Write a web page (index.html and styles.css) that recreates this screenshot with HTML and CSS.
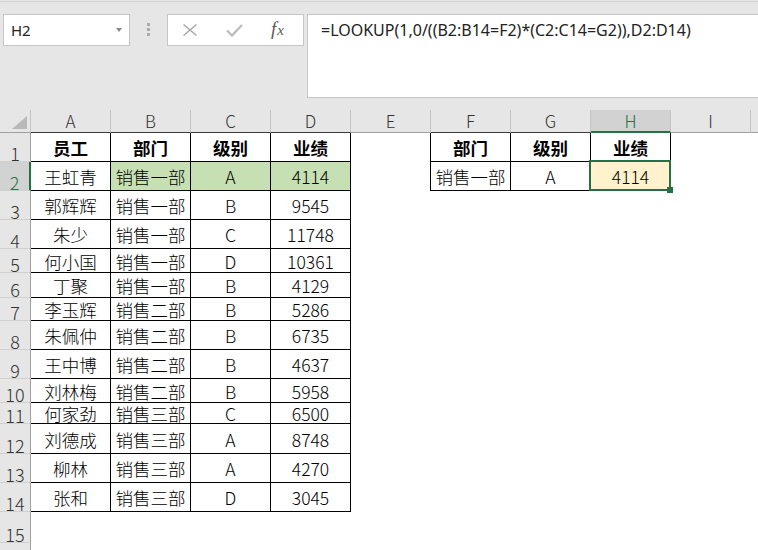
FILE: index.html
```html
<!DOCTYPE html>
<html lang="zh-CN">
<head>
<meta charset="utf-8">
<title>LOOKUP</title>
<link rel="stylesheet" href="styles.css">
</head>
<body>
<div class="toolbar">
  <div class="namebox"><span class="ref">H2</span><span class="caret"></span></div>
  <div class="grip"><i></i><i></i><i></i></div>
  <div class="fnbox">
    <svg class="ico-x" width="14" height="12" viewBox="0 0 14 12"><path d="M0.5 0.5 L13.5 11.5 M13.5 0.5 L0.5 11.5" stroke="#a3a3a3" stroke-width="1.3" fill="none"/></svg>
    <svg class="ico-ok" width="17" height="13" viewBox="0 0 17 13"><path d="M1 6.5 L6 11.5 L16 1" stroke="#bdbdbd" stroke-width="2.4" fill="none"/></svg>
    <span class="fx"><i>f</i><i class="fx-x">x</i></span>
  </div>
  <div class="formula">=LOOKUP(1,0/((B2:B14=F2)*(C2:C14=G2)),D2:D14)</div>
</div>
<div class="sheet">
  <div class="row colhead">
    <div class="corner"><span class="tri"></span></div>
    <div class="ch k">A</div><div class="ch k">B</div><div class="ch k">C</div><div class="ch k">D</div>
    <div class="ch">E</div><div class="ch k">F</div><div class="ch k">G</div><div class="ch cur">H</div>
    <div class="ch">I</div><div class="ch last"></div>
  </div>
  <div class="row h29">
    <div class="rh">1</div>
    <div class="c t b">员工</div><div class="c t b">部门</div><div class="c t b">级别</div><div class="c t b">业绩</div>
    <div class="c e"></div>
    <div class="c t fl b">部门</div><div class="c t b">级别</div><div class="c t b">业绩</div>
  </div>
  <div class="row h29">
    <div class="rh cur">2</div>
    <div class="c t">王虹青</div><div class="c t g">销售一部</div><div class="c t g">A</div><div class="c t g">4114</div>
    <div class="c e"></div>
    <div class="c t fl">销售一部</div><div class="c t">A</div>
    <div class="c t y active">4114<span class="selbox"></span><span class="handle"></span></div>
  </div>
  <div class="row h29"><div class="rh">3</div><div class="c t">郭辉辉</div><div class="c t">销售一部</div><div class="c t">B</div><div class="c t">9545</div></div>
  <div class="row h29"><div class="rh">4</div><div class="c t">朱少</div><div class="c t">销售一部</div><div class="c t">C</div><div class="c t">11748</div></div>
  <div class="row h24"><div class="rh">5</div><div class="c t">何小国</div><div class="c t">销售一部</div><div class="c t">D</div><div class="c t">10361</div></div>
  <div class="row h25"><div class="rh">6</div><div class="c t">丁聚</div><div class="c t">销售一部</div><div class="c t">B</div><div class="c t">4129</div></div>
  <div class="row h23"><div class="rh">7</div><div class="c t">李玉辉</div><div class="c t">销售二部</div><div class="c t">B</div><div class="c t">5286</div></div>
  <div class="row h29"><div class="rh">8</div><div class="c t">朱佩仲</div><div class="c t">销售二部</div><div class="c t">B</div><div class="c t">6735</div></div>
  <div class="row h29"><div class="rh">9</div><div class="c t">王中博</div><div class="c t">销售二部</div><div class="c t">B</div><div class="c t">4637</div></div>
  <div class="row h24"><div class="rh">10</div><div class="c t">刘林梅</div><div class="c t">销售二部</div><div class="c t">B</div><div class="c t">5958</div></div>
  <div class="row h21"><div class="rh">11</div><div class="c t">何家劲</div><div class="c t">销售三部</div><div class="c t">C</div><div class="c t">6500</div></div>
  <div class="row h30"><div class="rh">12</div><div class="c t">刘德成</div><div class="c t">销售三部</div><div class="c t">A</div><div class="c t">8748</div></div>
  <div class="row h29"><div class="rh">13</div><div class="c t">柳林</div><div class="c t">销售三部</div><div class="c t">A</div><div class="c t">4270</div></div>
  <div class="row h29"><div class="rh">14</div><div class="c t">张和</div><div class="c t">销售三部</div><div class="c t">D</div><div class="c t">3045</div></div>
  <div class="row h31"><div class="rh">15</div></div>
  <div class="row h8"><div class="rh"></div></div>
</div>
</body>
</html>
```

FILE: styles.css
```css
* { box-sizing: border-box; margin: 0; padding: 0; }
html, body { width: 758px; height: 550px; overflow: hidden; }
body {
  background: #fff;
  font-family: "Noto Sans CJK SC", "Noto Sans", sans-serif;
  color: #000;
}

/* ---------- formula bar ---------- */
.toolbar {
  height: 110px;
  display: flex;
  align-items: flex-start;
  padding: 14px 0 0 3px;
  background: linear-gradient(#e6e6e6 1px, #d2d2d2 1px, #d2d2d2 2px, #e6e6e6 2px);
  font-family: "Noto Sans", "Open Sans", sans-serif;
}
.namebox {
  width: 127px;
  height: 32px;
  background: #fff;
  border: 1px solid #c6c6c6;
  display: flex;
  align-items: center;
  padding-left: 7px;
}
.ref { font-size: 15px; color: #222; line-height: 20px; }
.caret {
  margin-left: auto;
  margin-right: 7px;
  border-left: 3.5px solid transparent;
  border-right: 3.5px solid transparent;
  border-top: 4px solid #8a8a8a;
}
.grip {
  margin: 9px 0 0 17px;
  display: flex;
  flex-direction: column;
  gap: 2px;
}
.grip i { display: block; width: 3px; height: 3px; background: #ababab; }
.fnbox {
  margin-left: 17px;
  width: 137px;
  height: 32px;
  background: #fff;
  border: 1px solid #c6c6c6;
  display: flex;
  align-items: center;
  padding-left: 15px;
}
.ico-ok { margin-left: 29px; }
.fx {
  margin-left: 28px;
  font-family: "Liberation Serif", serif;
  font-size: 19px;
  color: #5a5a5a;
  line-height: 20px;
  margin-top: -2px;
}
.fx i { font-style: italic; }
.fx-x { font-size: 15px; margin-left: 1px; }
.formula {
  margin-left: 3px;
  flex: 1;
  height: 84px;
  background: #fff;
  border: 1px solid #c6c6c6;
  border-right: 0;
  padding: 5px 0 0 13px;
  font-size: 16px;
  line-height: 20px;
  color: #222;
  white-space: nowrap;
}

/* ---------- grid ---------- */
.sheet { display: flex; flex-direction: column; }
.row { display: flex; flex: none; }
.h8 { height: 8px; }
.h21 { height: 21px; }
.h23 { height: 23px; }
.h24 { height: 24px; }
.h25 { height: 25px; }
.h29 { height: 29px; }
.h30 { height: 30px; }
.h31 { height: 31px; }

.colhead { height: 23px; background: #e6e6e6; }
.corner {
  position: relative;
  flex: none;
  width: 31px;
  border-right: 1px solid #c4c4c4;
  border-bottom: 1px solid #a0a0a0;
}
.tri {
  position: absolute;
  right: 3px;
  bottom: 3px;
  width: 15px;
  height: 13px;
  background: #b9b9b9;
  clip-path: polygon(100% 0, 100% 100%, 0 100%);
}
.ch {
  flex: none;
  width: 80px;
  border-right: 1px solid #c4c4c4;
  border-bottom: 1px solid #a0a0a0;
  display: flex;
  align-items: center;
  justify-content: center;
  font-size: 17px;
  font-weight: 300;
  line-height: 20px;
  color: #333;
}
.ch.k { border-bottom-color: #3a3a3a; }
.ch.cur {
  background: #d2d2d2;
  color: #217346;
  border-bottom: 2px solid #217346;
}
.ch.last { flex: 1; min-width: 0; border-right: 0; }

.rh {
  flex: none;
  width: 31px;
  background: #e6e6e6;
  border-right: 1px solid #a0a0a0;
  border-bottom: 1px solid #d0d0d0;
  display: flex;
  align-items: flex-end;
  justify-content: center;
  font-size: 18px;
  font-weight: 300;
  line-height: 16px;
  color: #333;
}
.rh.cur {
  background: #d2d2d2;
  color: #217346;
  border-right: 2px solid #217346;
}

.c {
  flex: none;
  width: 80px;
  display: flex;
  align-items: center;
  justify-content: center;
  padding-top: 2px;
  font-size: 17.5px;
  font-weight: 300;
  line-height: 18px;
  white-space: nowrap;
}
.t { border-right: 1px solid #000; border-bottom: 1px solid #000; }
.fl { width: 81px; border-left: 1px solid #000; }
.e { width: 79px; }
.b { font-weight: 700; }
.g { background: #c6e0b4; }
.y { background: #fff2cc; }
.active { position: relative; }
.selbox {
  position: absolute;
  left: -2px;
  top: -2px;
  right: -1px;
  bottom: -1px;
  border: 2px solid #217346;
}
.handle {
  position: absolute;
  left: 76px;
  top: 25px;
  width: 6px;
  height: 6px;
  background: #217346;
}
```
